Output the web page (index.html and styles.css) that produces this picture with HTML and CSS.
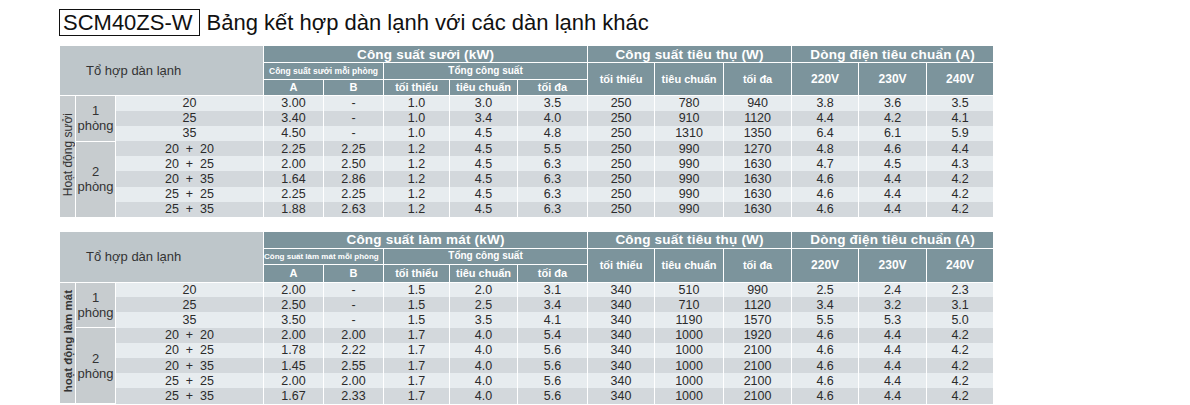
FILE: index.html
```html
<!DOCTYPE html>
<html lang="vi">
<head>
<meta charset="utf-8">
<title>SCM40ZS-W</title>
<link rel="stylesheet" href="styles.css">
</head>
<body>
<div class="page">
  <h1 class="title"><span class="model">SCM40ZS-W</span><span class="caption">Bảng kết hợp dàn lạnh với các dàn lạnh khác</span></h1>

  <table class="spec spec-heat">
    <colgroup>
      <col class="c-mode"><col class="c-room"><col class="c-combo">
      <col class="c-a"><col class="c-b">
      <col class="c-v1"><col class="c-v2"><col class="c-v3">
      <col class="c-p1"><col class="c-p2"><col class="c-p3">
      <col class="c-i1"><col class="c-i2"><col class="c-i3">
    </colgroup>
    <thead>
      <tr class="h1">
        <th colspan="3" rowspan="3" class="combo-head">Tổ hợp dàn lạnh</th>
        <th colspan="5" class="big">Công suất sưởi (kW)</th>
        <th colspan="3" class="big">Công suất tiêu thụ (W)</th>
        <th colspan="3" class="big">Dòng điện tiêu chuẩn (A)</th>
      </tr>
      <tr class="h2">
        <th colspan="2" class="tiny">Công suất sưởi mỗi phòng</th>
        <th colspan="3" class="small">Tổng công suất</th>
        <th rowspan="2" class="sub">tối thiểu</th>
        <th rowspan="2" class="sub">tiêu chuẩn</th>
        <th rowspan="2" class="sub">tối đa</th>
        <th rowspan="2" class="volt">220V</th>
        <th rowspan="2" class="volt">230V</th>
        <th rowspan="2" class="volt">240V</th>
      </tr>
      <tr class="h3">
        <th class="sub">A</th><th class="sub">B</th>
        <th class="sub">tối thiểu</th><th class="sub">tiêu chuẩn</th><th class="sub">tối đa</th>
      </tr>
    </thead>
    <tbody>
      <tr class="odd">
        <td rowspan="8" class="mode"><span class="vert">Hoạt động sưởi</span></td>
        <td rowspan="3" class="room">1<br>phòng</td>
        <td>20</td><td>3.00</td><td>-</td><td>1.0</td><td>3.0</td><td>3.5</td><td>250</td><td>780</td><td>940</td><td>3.8</td><td>3.6</td><td>3.5</td>
      </tr>
      <tr class="even"><td>25</td><td>3.40</td><td>-</td><td>1.0</td><td>3.4</td><td>4.0</td><td>250</td><td>910</td><td>1120</td><td>4.4</td><td>4.2</td><td>4.1</td></tr>
      <tr class="odd"><td>35</td><td>4.50</td><td>-</td><td>1.0</td><td>4.5</td><td>4.8</td><td>250</td><td>1310</td><td>1350</td><td>6.4</td><td>6.1</td><td>5.9</td></tr>
      <tr class="even">
        <td rowspan="5" class="room">2<br>phòng</td>
        <td>20&nbsp;&nbsp;+&nbsp;&nbsp;20</td><td>2.25</td><td>2.25</td><td>1.2</td><td>4.5</td><td>5.5</td><td>250</td><td>990</td><td>1270</td><td>4.8</td><td>4.6</td><td>4.4</td>
      </tr>
      <tr class="odd"><td>20&nbsp;&nbsp;+&nbsp;&nbsp;25</td><td>2.00</td><td>2.50</td><td>1.2</td><td>4.5</td><td>6.3</td><td>250</td><td>990</td><td>1630</td><td>4.7</td><td>4.5</td><td>4.3</td></tr>
      <tr class="even"><td>20&nbsp;&nbsp;+&nbsp;&nbsp;35</td><td>1.64</td><td>2.86</td><td>1.2</td><td>4.5</td><td>6.3</td><td>250</td><td>990</td><td>1630</td><td>4.6</td><td>4.4</td><td>4.2</td></tr>
      <tr class="odd"><td>25&nbsp;&nbsp;+&nbsp;&nbsp;25</td><td>2.25</td><td>2.25</td><td>1.2</td><td>4.5</td><td>6.3</td><td>250</td><td>990</td><td>1630</td><td>4.6</td><td>4.4</td><td>4.2</td></tr>
      <tr class="even"><td>25&nbsp;&nbsp;+&nbsp;&nbsp;35</td><td>1.88</td><td>2.63</td><td>1.2</td><td>4.5</td><td>6.3</td><td>250</td><td>990</td><td>1630</td><td>4.6</td><td>4.4</td><td>4.2</td></tr>
    </tbody>
  </table>

  <table class="spec spec-cool">
    <colgroup>
      <col class="c-mode"><col class="c-room"><col class="c-combo">
      <col class="c-a"><col class="c-b">
      <col class="c-v1"><col class="c-v2"><col class="c-v3">
      <col class="c-p1"><col class="c-p2"><col class="c-p3">
      <col class="c-i1"><col class="c-i2"><col class="c-i3">
    </colgroup>
    <thead>
      <tr class="h1">
        <th colspan="3" rowspan="3" class="combo-head">Tổ hợp dàn lạnh</th>
        <th colspan="5" class="big">Công suất làm mát (kW)</th>
        <th colspan="3" class="big">Công suất tiêu thụ (W)</th>
        <th colspan="3" class="big">Dòng điện tiêu chuẩn (A)</th>
      </tr>
      <tr class="h2">
        <th colspan="2" class="tiny tiny-cool">Công suất làm mát mỗi phòng</th>
        <th colspan="3" class="small">Tổng công suất</th>
        <th rowspan="2" class="sub">tối thiểu</th>
        <th rowspan="2" class="sub">tiêu chuẩn</th>
        <th rowspan="2" class="sub">tối đa</th>
        <th rowspan="2" class="volt">220V</th>
        <th rowspan="2" class="volt">230V</th>
        <th rowspan="2" class="volt">240V</th>
      </tr>
      <tr class="h3">
        <th class="sub">A</th><th class="sub">B</th>
        <th class="sub">tối thiểu</th><th class="sub">tiêu chuẩn</th><th class="sub">tối đa</th>
      </tr>
    </thead>
    <tbody>
      <tr class="odd">
        <td rowspan="8" class="mode"><span class="vert vert-bold">hoạt động làm mát</span></td>
        <td rowspan="3" class="room">1<br>phòng</td>
        <td>20</td><td>2.00</td><td>-</td><td>1.5</td><td>2.0</td><td>3.1</td><td>340</td><td>510</td><td>990</td><td>2.5</td><td>2.4</td><td>2.3</td>
      </tr>
      <tr class="even"><td>25</td><td>2.50</td><td>-</td><td>1.5</td><td>2.5</td><td>3.4</td><td>340</td><td>710</td><td>1120</td><td>3.4</td><td>3.2</td><td>3.1</td></tr>
      <tr class="odd"><td>35</td><td>3.50</td><td>-</td><td>1.5</td><td>3.5</td><td>4.1</td><td>340</td><td>1190</td><td>1570</td><td>5.5</td><td>5.3</td><td>5.0</td></tr>
      <tr class="even">
        <td rowspan="5" class="room">2<br>phòng</td>
        <td>20&nbsp;&nbsp;+&nbsp;&nbsp;20</td><td>2.00</td><td>2.00</td><td>1.7</td><td>4.0</td><td>5.4</td><td>340</td><td>1000</td><td>1920</td><td>4.6</td><td>4.4</td><td>4.2</td>
      </tr>
      <tr class="odd"><td>20&nbsp;&nbsp;+&nbsp;&nbsp;25</td><td>1.78</td><td>2.22</td><td>1.7</td><td>4.0</td><td>5.6</td><td>340</td><td>1000</td><td>2100</td><td>4.6</td><td>4.4</td><td>4.2</td></tr>
      <tr class="even"><td>20&nbsp;&nbsp;+&nbsp;&nbsp;35</td><td>1.45</td><td>2.55</td><td>1.7</td><td>4.0</td><td>5.6</td><td>340</td><td>1000</td><td>2100</td><td>4.6</td><td>4.4</td><td>4.2</td></tr>
      <tr class="odd"><td>25&nbsp;&nbsp;+&nbsp;&nbsp;25</td><td>2.00</td><td>2.00</td><td>1.7</td><td>4.0</td><td>5.6</td><td>340</td><td>1000</td><td>2100</td><td>4.6</td><td>4.4</td><td>4.2</td></tr>
      <tr class="even"><td>25&nbsp;&nbsp;+&nbsp;&nbsp;35</td><td>1.67</td><td>2.33</td><td>1.7</td><td>4.0</td><td>5.6</td><td>340</td><td>1000</td><td>2100</td><td>4.6</td><td>4.4</td><td>4.2</td></tr>
    </tbody>
  </table>
</div>
</body>
</html>
```
FILE: styles.css
```css
* { box-sizing: border-box; }
html, body { margin: 0; padding: 0; background: #ffffff; }
body {
  font-family: "Liberation Sans", Arial, "Noto Sans", sans-serif;
  color: #2b2b2b;
}
.page {
  padding: 9px 0 0 59px;
}
.title {
  margin: 0;
  display: flex;
  align-items: center;
  gap: 7px;
  font-weight: normal;
  font-size: 22px;
  line-height: 24px;
  color: #111;
}
.model {
  display: inline-block;
  border: 1.5px solid #111;
  height: 27px;
  padding: 1px 6px 0 3px;
}
.caption { display: inline-block; }

.spec {
  border-collapse: collapse;
  table-layout: fixed;
  width: 934px;
  margin-top: 9px;
}
.spec-cool { margin-top: 13px; }

.c-mode { width: 16px; }
.c-room { width: 40px; }
.c-combo { width: 148px; }
.c-a { width: 60px; }
.c-b { width: 60px; }
.c-v1 { width: 66px; }
.c-v2 { width: 68px; }
.c-v3 { width: 70px; }
.c-p1 { width: 67px; }
.c-p2 { width: 69px; }
.c-p3 { width: 68px; }
.c-i1 { width: 67px; }
.c-i2 { width: 68px; }
.c-i3 { width: 67px; }

.spec th {
  background: #7c949c;
  color: #ffffff;
  font-weight: bold;
  border: 1px solid #ffffff;
  padding: 0;
  text-align: center;
  vertical-align: middle;
  white-space: nowrap;
  overflow: hidden;
}
.spec .h1 { height: 17px; }
.spec .h2 { height: 17px; }
.spec .h3 { height: 16px; }
.spec-cool .h2 { height: 16px; }
.spec-cool .h3 { height: 18px; }

.spec th.combo-head {
  background: #bec6ca;
  color: #333;
  font-weight: normal;
  font-size: 13px;
  text-align: left;
  padding-left: 26px;
}
.spec th.big { font-size: 13.5px; line-height: 15px; letter-spacing: 0.2px; }
.spec th.small { font-size: 10px; line-height: 12px; }
.spec th.tiny { font-size: 8.5px; line-height: 11px; }
.spec th.tiny-cool { font-size: 8px; text-align: left; padding-left: 0; }
.spec th.sub { font-size: 11px; line-height: 13px; }
.spec th.volt { font-size: 12px; line-height: 14px; }

.spec td {
  padding: 0;
  height: 15.2px;
  font-size: 12.5px;
  line-height: 14px;
  text-align: center;
  vertical-align: middle;
  border-left: 1px solid #ffffff;
  border-right: 1px solid #ffffff;
  white-space: nowrap;
  color: #2b2b2b;
}
.spec tr.odd td { background: #e7ecef; }
.spec tr.even td { background: #d3d8dc; }
.spec tr td.mode,
.spec tr td.room {
  background: #c7cccf;
  color: #333;
  border: 1px solid #ffffff;
}
.spec td.mode { border-left: none; }
.spec td.room {
  font-size: 13px;
  line-height: 15px;
}
.vert {
  display: inline-block;
  writing-mode: vertical-rl;
  transform: rotate(180deg);
  font-size: 12px;
  line-height: 14px;
  white-space: nowrap;
}
.vert-bold {
  font-weight: bold;
  font-size: 11.5px;
}
```
